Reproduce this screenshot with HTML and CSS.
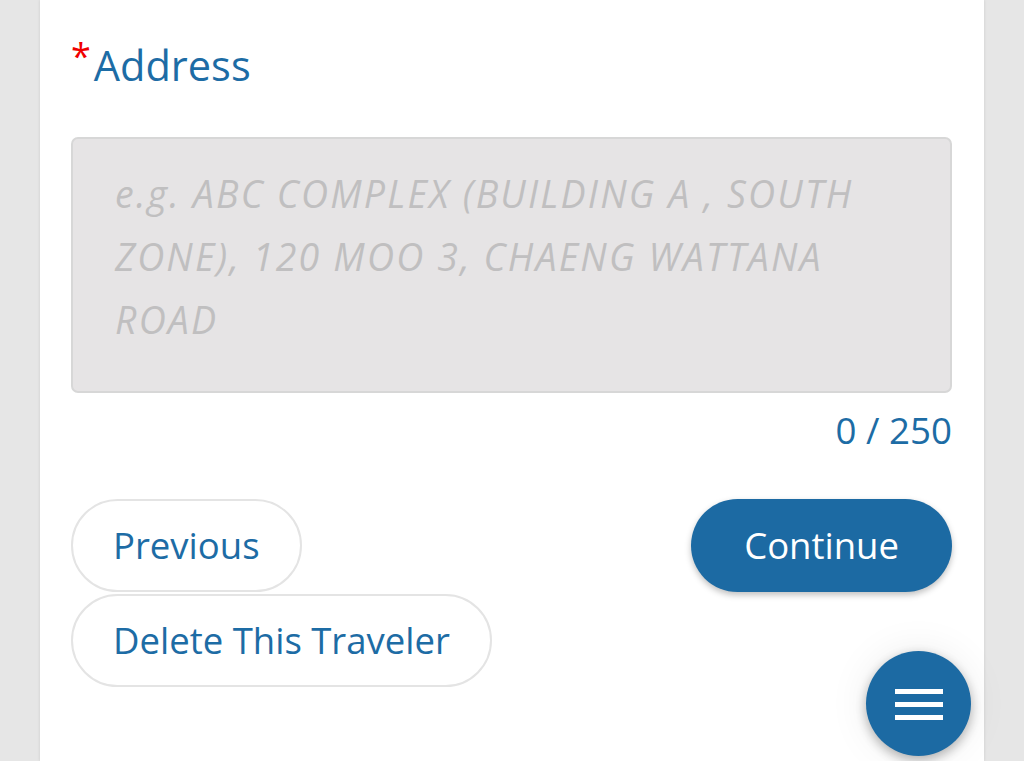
FILE: index.html
```html
<!DOCTYPE html>
<html lang="en">
<head>
<meta charset="utf-8">
<title>Address</title>
<link rel="stylesheet" href="styles.css">
</head>
<body>
<main class="card">
  <label class="field-label" for="address"><span class="req">*</span>Address</label>
  <textarea id="address" class="textarea" placeholder="e.g. ABC COMPLEX (BUILDING A , SOUTH ZONE), 120 MOO 3, CHAENG WATTANA ROAD"></textarea>
  <div class="counter">0 / 250</div>
  <div class="actions">
    <button class="btn btn-outline">Previous</button>
    <button class="btn btn-primary">Continue</button>
  </div>
  <div class="actions-secondary">
    <button class="btn btn-outline">Delete This Traveler</button>
  </div>
</main>
<button class="fab" aria-label="Menu">
  <svg width="48" height="32" viewBox="0 0 48 32"><rect x="0" y="1" width="48" height="5" fill="#fff"/><rect x="0" y="14" width="48" height="5" fill="#fff"/><rect x="0" y="27" width="48" height="5" fill="#fff"/></svg>
</button>
</body>
</html>
```

FILE: styles.css
```css
html, body {
  margin: 0;
  padding: 0;
  height: 100%;
}
body {
  background: #e6e6e6;
  font-family: "Open Sans", "Liberation Sans", sans-serif;
  overflow: hidden;
}
.card {
  width: 944px;
  min-height: 761px;
  margin: 0 auto;
  background: #fff;
  box-sizing: border-box;
  padding: 37px 32px 0 31px;
  box-shadow: 0 0 3px rgba(0,0,0,0.12);
}
.field-label {
  display: block;
  font-size: 41.5px;
  color: #1d6ca5;
  line-height: 56px;
  margin: 0;
}
.req {
  color: #f00000;
  font-size: 36px;
  vertical-align: 12px;
  margin-right: 3px;
  line-height: 0;
}
.textarea {
  display: block;
  box-sizing: border-box;
  width: 100%;
  height: 256px;
  margin-top: 44px;
  background: #e6e4e5;
  border: 2px solid #d7d7d7;
  border-radius: 7px;
  padding: 23px 36px 0 42px;
  font-family: "Open Sans", "Liberation Sans", sans-serif;
  font-size: 37.5px;
  line-height: 63px;
  font-style: italic;
  color: #444;
  resize: none;
  outline: none;
  letter-spacing: 2.2px;
}
.textarea::placeholder {
  color: #c0bfc0;
  opacity: 1;
}
.counter {
  text-align: right;
  font-size: 36.7px;
  line-height: 49px;
  color: #1d6ca5;
  margin-top: 13px;
}
.actions {
  display: flex;
  justify-content: space-between;
  align-items: center;
  margin-top: 44px;
}
.actions-secondary {
  margin-top: 2px;
}
.btn {
  font-family: "Open Sans", "Liberation Sans", sans-serif;
  font-size: 36.5px;
  line-height: 49px;
  height: 93px;
  box-sizing: border-box;
  border-radius: 47px;
  padding: 0 40px;
  cursor: pointer;
}
.btn-outline {
  background: #fff;
  color: #1d6ca5;
  border: 2px solid #e4e4e4;
}
.btn-primary {
  background: #1c6aa3;
  color: #fff;
  border: none;
  padding: 0 53px;
  box-shadow: 0 3px 6px rgba(0,0,0,0.25);
}
.fab {
  position: fixed;
  right: 53px;
  bottom: 5px;
  width: 105px;
  height: 105px;
  border-radius: 50%;
  border: none;
  background: #1c6aa3;
  display: flex;
  align-items: center;
  justify-content: center;
  padding: 0;
  box-shadow: 0 4px 12px rgba(0,0,0,0.3), 0 0 40px rgba(0,0,0,0.08);
}
```
